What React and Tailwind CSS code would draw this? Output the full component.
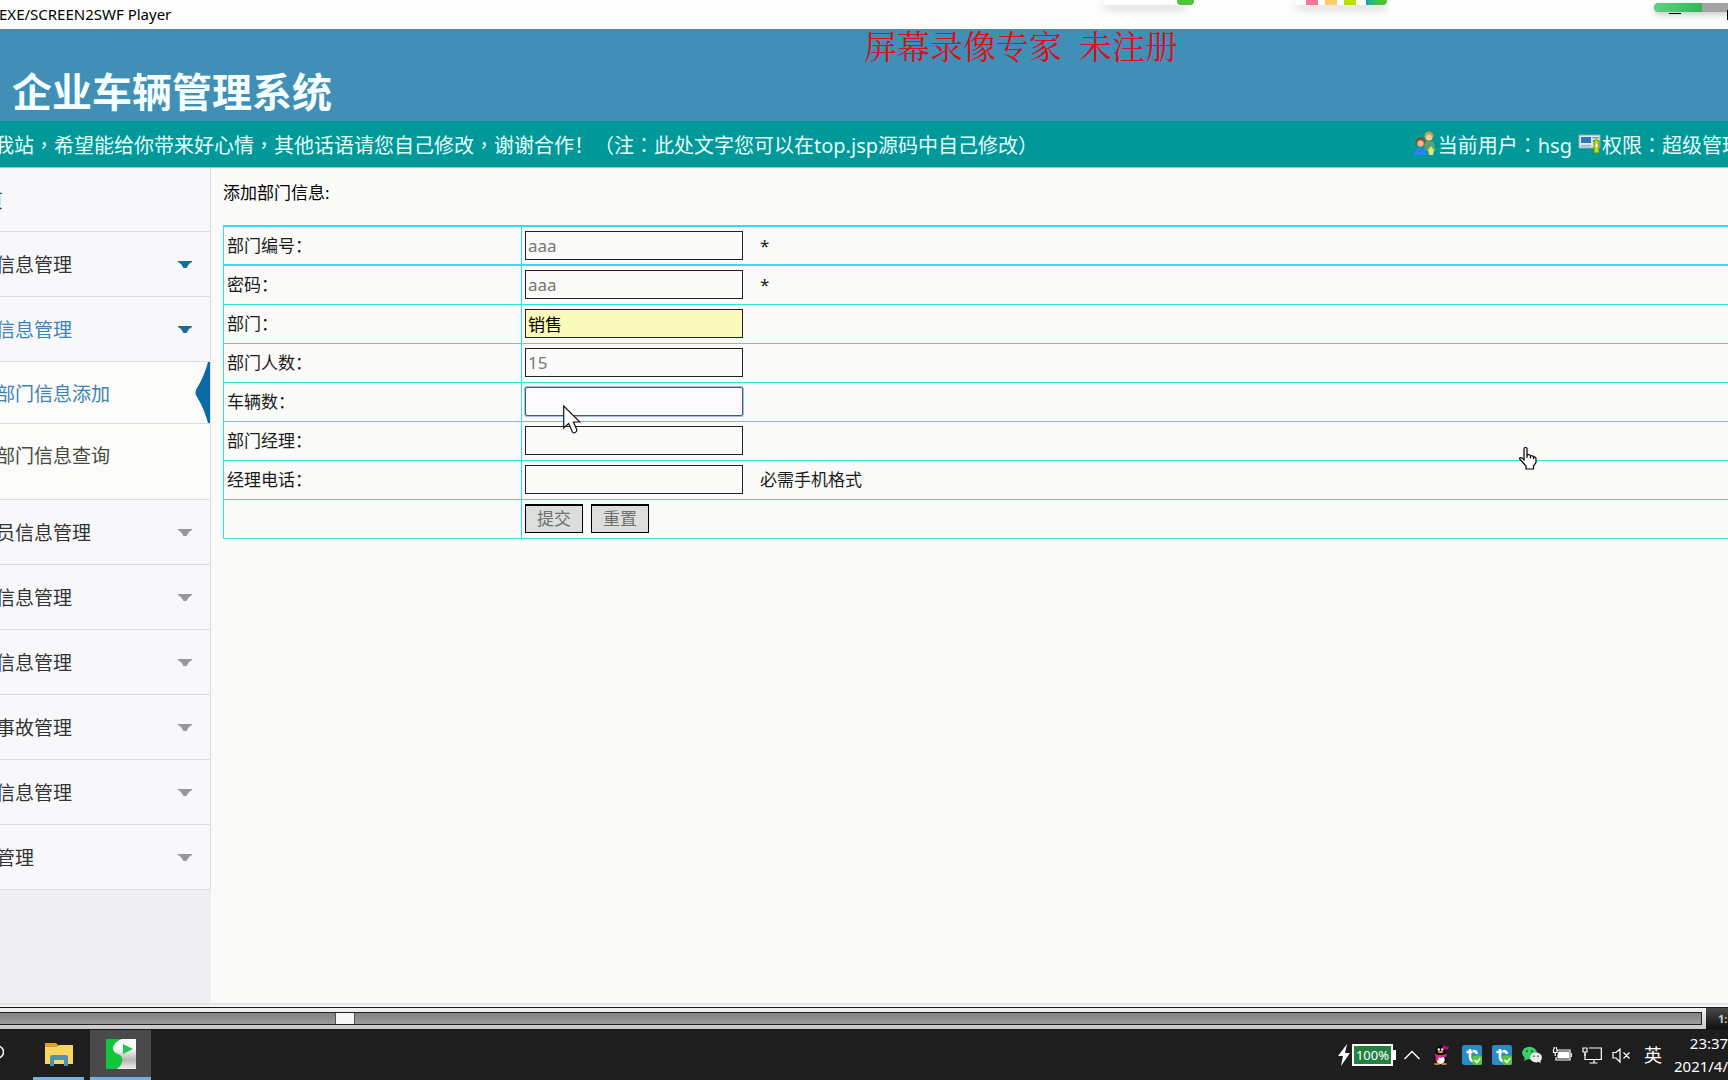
import React, { useState } from 'react';

const menuTop = [
  { label: '信息管理', state: 'opened' },
  { label: '信息管理', state: 'active' },
];

const menuBottom = ['员信息管理', '信息管理', '信息管理', '事故管理', '信息管理', '管理'];

const fields = [
  { id: 'number', label: '部门编号：', value: 'aaa', note: '*' },
  { id: 'password', label: '密码：', value: 'aaa', note: '*' },
  { id: 'dept', label: '部门：', value: '销售', look: 'filled' },
  { id: 'people', label: '部门人数：', value: '15' },
  { id: 'cars', label: '车辆数：', value: '', look: 'focused' },
  { id: 'manager', label: '部门经理：', value: '' },
  { id: 'phone', label: '经理电话：', value: '', note: '必需手机格式' },
];

export default function App() {
  return (
    <div className="relative flex min-h-screen flex-col overflow-hidden bg-[#fafaf8] font-['Noto_Sans','Noto_Sans_CJK_SC',sans-serif] text-[#1a1a1a]">
      <TitleBar />
      <Banner />
      <div className="flex flex-1">
        <Sidebar />
        <DepartmentForm />
      </div>
      <PlayerBar />
      <Taskbar />
      <HandCursor />
    </div>
  );
}

function TitleBar() {
  return (
    <div className="relative flex h-[29px] shrink-0 items-start bg-[#fefefe] pt-1">
      <span className="-ml-px text-[15px] leading-5 text-black">EXE/SCREEN2SWF Player</span>

      {/* floating toolbars that hang over the top edge */}
      <div className="absolute top-0 left-[1104px] h-[5px] w-[82px] bg-white shadow-[0_4px_8px_rgba(0,0,0,0.2)]"></div>
      <div className="absolute top-0 left-[1177px] h-[5px] w-[17px] rounded-b bg-[#4bc636]"></div>
      <div className="absolute top-0 left-[1296px] flex h-[5px] w-[91px] gap-[7px] bg-white pl-[10px] shadow-[0_4px_8px_rgba(0,0,0,0.2)]">
        <span className="w-3 bg-[#f2789c]"></span>
        <span className="w-3 bg-[#fbcd6b]"></span>
        <span className="w-3 bg-[#b9dc18]"></span>
        <span className="ml-[3px] flex-1 rounded-br bg-gradient-to-r from-[#16a3b8] via-[#3cc23c] to-[#4bc636]"></span>
      </div>
      <div className="absolute top-[3px] right-0 flex h-[9px] w-[74px] overflow-hidden rounded-l-full bg-[#a3a3a6] shadow-[0_3px_6px_rgba(0,0,0,0.2)]">
        <span className="w-12 bg-gradient-to-r from-[#5bd283] to-[#2db854]"></span>
      </div>
      <div className="absolute top-[13px] right-[47px] h-px w-3 bg-black"></div>
      <div className="absolute top-[10px] right-0 h-[10px] w-px bg-black"></div>
    </div>
  );
}

function Banner() {
  return (
    <header className="shrink-0">
      <div className="relative flex h-[92px] items-end border-t border-[#558a9c] bg-[#418fb7] pb-px pl-3">
        <h1 className="text-[40px] leading-[56px] font-bold text-[#f4ffff]">企业车辆管理系统</h1>
        <div className="absolute top-0 left-1/2 text-[33px] leading-[30px] whitespace-pre text-[#dc0d1c] font-['Noto_Serif_CJK_SC','Noto_Sans_CJK_SC',serif]">屏幕录像专家  未注册</div>
      </div>
      <div className="flex h-[47px] items-center justify-between overflow-hidden border-b border-[#8fc9cb] bg-[#009899] pt-[3px] text-xl leading-7 whitespace-nowrap text-[#e6ffff]">
        <span className="-ml-1.5 shrink-0">
          <Marked text="我站，希望能给你带来好心情，其他话语请您自己修改，谢谢合作！（注：此处文字您可以在top.jsp源码中自己修改）" />
        </span>
        <div className="-mr-3.5 flex shrink-0 items-center">
          <UsersIcon />
          <span><Marked text="当前用户：hsg" /></span>
          <RoleIcon />
          <span><Marked text="权限：超级管理" /></span>
        </div>
      </div>
    </header>
  );
}

// commas and colons sit in the middle of their square in the banner
function Marked({ text }) {
  return text.split(/([，：])/).map((part, i) =>
    part === '，' || part === '：' ? (
      <span key={i} className="font-['Noto_Sans_CJK_TC',sans-serif]">{part}</span>
    ) : (
      part
    )
  );
}

function Sidebar() {
  return (
    <nav className="w-[211px] shrink-0 overflow-hidden bg-[#efeef2] text-[19px] leading-7">
      <ul className="border-r border-[#dddce0]">
        <li className="h-16 border-b border-[#dddce0] bg-[#f8f7fa]">
          <a href="#home" className="-ml-4 flex h-full items-center pt-0.5 text-[#333]">页</a>
        </li>
        {menuTop.map((item, i) => (
          <MenuItem key={i} label={item.label} state={item.state} />
        ))}
        <li className="border-b border-[#dddce0] bg-[#fbfbf9] pb-3.5">
          <ul>
            <li className="relative h-[62px] border-b border-[#dddce0]">
              <a href="#add" className="-ml-1 flex h-full items-center pt-0.5 text-[#3f82b4]">部门信息添加</a>
              <svg className="absolute top-0 right-0 h-[61px] w-4" viewBox="0 0 16 61" preserveAspectRatio="none">
                <path d="M16 0h-2C12 8 8 18 3 26Q0 30.5 3 35C8 43 12 53 14 61h2z" fill="#0c6aa3" />
              </svg>
            </li>
            <li className="h-[61px]">
              <a href="#query" className="-ml-1 flex h-full items-center pt-0.5 text-[#444a3c]">部门信息查询</a>
            </li>
          </ul>
        </li>
        {menuBottom.map((label, i) => (
          <MenuItem key={i} label={label} />
        ))}
      </ul>
    </nav>
  );
}

function MenuItem({ label, state }) {
  return (
    <li className="h-[65px] border-b border-[#dddce0] bg-[#f8f7fa]">
      <a
        href="#menu"
        className={`-ml-1 flex h-full items-center justify-between pt-0.5 pr-[18px] ${state === 'active' ? 'text-[#3f82b4]' : 'text-[#333]'}`}
      >
        {label}
        <svg className={`h-2 w-3.5 ${state ? 'text-[#1b6a97]' : 'text-[#97979a]'}`} viewBox="0 0 14 8">
          <path d="M0 0h14v1L11 3L8.500 7H5.500L3 3L0 1z" fill="currentColor" />
        </svg>
      </a>
    </li>
  );
}

function DepartmentForm() {
  const [values, setValues] = useState(Object.fromEntries(fields.map((f) => [f.id, f.value])));

  const cell = 'border-[#2fe3e4] px-[3px] py-0';

  return (
    <main className="min-w-0 flex-1 pl-3 text-[17px] leading-6">
      <h2 className="mb-2 flex h-[49px] items-center text-black">添加部门信息:</h2>
      <form onSubmit={(e) => e.preventDefault()}>
        <table className="w-full table-fixed border-collapse">
          <colgroup>
            <col className="w-[298px]" />
            <col />
          </colgroup>
          <tbody>
            {fields.map((f, i) => (
              <tr key={f.id} className="h-[39px]">
                <td className={`${cell} border-r border-b border-l ${i < 2 ? 'border-t-2' : 'border-t'}`}>
                  <label htmlFor={f.id}>{f.label}</label>
                </td>
                <td className={`${cell} border-b ${i < 2 ? 'border-t-2' : 'border-t'}`}>
                  <div className="relative flex items-center gap-[17px]">
                    <Field field={f} value={values[f.id]} onChange={(v) => setValues({ ...values, [f.id]: v })} />
                    {f.note && <span>{f.note}</span>}
                    {f.look === 'focused' && <ArrowCursor />}
                  </div>
                </td>
              </tr>
            ))}
            <tr className="h-[39px]">
              <td className={`${cell} border`}></td>
              <td className={`${cell} border-t border-b`}>
                <div className="flex gap-2">
                  <FormButton type="submit">提交</FormButton>
                  <FormButton type="reset">重置</FormButton>
                </div>
              </td>
            </tr>
          </tbody>
        </table>
      </form>
    </main>
  );
}

function Field({ field, value, onChange }) {
  const looks = {
    filled: 'border-[#222] bg-[#fafbba] text-black',
    focused: 'rounded-xs border-[#3a5c98] bg-[#fbfbfd] text-[#777] ring-1 ring-[#3a5c98]/40',
  };

  return (
    <input
      id={field.id}
      type="text"
      value={value}
      onChange={(e) => onChange(e.target.value)}
      className={`h-[29px] w-[218px] border px-0.5 outline-none ${looks[field.look] || 'border-[#222] bg-[#fafaf8] text-[#777]'}`}
    />
  );
}

function FormButton({ type, children }) {
  return (
    <button type={type} className="h-[29px] w-[58px] border border-t-2 border-black bg-[#dcdedc] leading-6 text-[#707070]">
      {children}
    </button>
  );
}

function PlayerBar() {
  const [position, setPosition] = useState(199);

  return (
    <div className="shrink-0 border-t-2 border-[#e4e4e4] bg-[#f6f6f6] pt-0.5">
      <div className="flex h-[23px] border-y border-[#1a1a1a] bg-[#111]">
        <div className="flex flex-1 items-center bg-gradient-to-b from-[#f2f2f2] to-[#c9c9c7] pr-1">
          <input
            type="range"
            aria-label="播放进度"
            min="0"
            max="1000"
            value={position}
            onChange={(e) => setPosition(Number(e.target.value))}
            className="h-[13px] w-full appearance-none border-y border-r border-[#222] bg-gradient-to-b from-[#828282] to-[#9b9b9b] outline-none [&::-webkit-slider-thumb]:h-[11px] [&::-webkit-slider-thumb]:w-5 [&::-webkit-slider-thumb]:appearance-none [&::-webkit-slider-thumb]:border-x [&::-webkit-slider-thumb]:border-[#555] [&::-webkit-slider-thumb]:bg-[#f6f6f6]"
          />
        </div>
        <div className="flex w-[22px] items-center overflow-hidden bg-gradient-to-b from-[#4a4a4a] to-[#111] pl-3 text-[11px] leading-4 font-bold whitespace-nowrap text-[#c8c8c8]">1:</div>
      </div>
    </div>
  );
}

function Taskbar() {
  return (
    <footer className="flex h-[50px] shrink-0 items-stretch justify-between overflow-hidden bg-[#1e1e1f] text-white">
      <div className="flex">
        <svg className="mr-[29px] h-full w-1" viewBox="0 0 4 50">
          <circle cx="-2.500" cy="22" r="6" fill="none" stroke="#fff" strokeWidth="1.500" />
        </svg>
        <button type="button" aria-label="文件资源管理器" className="mr-1.5 flex w-[51px] items-center justify-center border-b-[3px] border-[#76b0e0]">
          <FolderIcon />
        </button>
        <button type="button" aria-label="录像播放器" className="flex w-[61px] items-center justify-center border-b-[3px] border-[#76b0e0] bg-[#4a4a4c]">
          <PlayerIcon />
        </button>
      </div>
      <div className="flex items-center">
        <svg className="mr-0.5 h-6 w-3" viewBox="0 0 12 24">
          <path d="M9 1L0 13h5L3 23l9-13H7z" fill="#fff" />
        </svg>
        <span className="flex h-[22px] w-[41px] items-center justify-center border-2 border-white bg-[#23803f] text-[13px] leading-4">100%</span>
        <span className="mr-2 h-2.5 w-[3px] bg-white"></span>
        <svg className="mr-3 h-2.5 w-4" viewBox="0 0 16 10">
          <path d="M0.500 9L8 1.500L15.500 9" fill="none" stroke="#fff" strokeWidth="1.400" />
        </svg>
        <PenguinIcon />
        <SyncIcon />
        <SyncIcon />
        <WechatIcon />
        <svg className="mr-2.5 h-5 w-5" viewBox="0 0 20 20" fill="none" stroke="#fff" strokeWidth="1.200">
          <path d="M1.500 4v3.500h3.500V4M2.200 2v2M4.300 2v2M3.200 7.500V11" />
          <path d="M5 5h13v10H4v-3" />
          <path d="M7 7h9.500v6H6v-3z" fill="#fff" />
          <path d="M19.300 8v4" />
        </svg>
        <svg className="mr-2.5 h-5 w-5" viewBox="0 0 20 20" fill="none" stroke="#fff" strokeWidth="1.200">
          <path d="M7 3h12.300v11.500H3V8M12 14.500V18M7.500 18h8" />
          <path d="M1 3h4v4H1zM3 7v4" />
        </svg>
        <svg className="mr-3 h-5 w-5" viewBox="0 0 20 20" fill="none" stroke="#fff" strokeWidth="1.200">
          <path d="M1 7.500h3L8 4v13l-4-4H1zM11.500 7.500l6 6M17.500 7.500l-6 6" />
        </svg>
        <span className="mr-3 text-[18px] leading-6">英</span>
        <div className="flex w-[54px] flex-col items-center text-[15px] leading-[23px] whitespace-nowrap">
          <span className="ml-4">23:37</span>
          <span>2021/4/</span>
        </div>
      </div>
    </footer>
  );
}

function UsersIcon() {
  return (
    <svg className="mr-px mb-1.5 h-6 w-6" viewBox="0 0 24 24">
      <circle cx="16" cy="5" r="4.500" fill="#c9a24a" />
      <circle cx="16" cy="6.500" r="3" fill="#f3cf9b" />
      <path d="M11 11q5-2 10 0l2 9H12z" fill="#5aa06a" />
      <circle cx="7.500" cy="11" r="4.700" fill="#8a4b35" />
      <circle cx="7.500" cy="12.500" r="3.200" fill="#f0b58c" />
      <path d="M1 24q0-7 6.500-7T14 24z" fill="#2f80ea" />
      <path d="M18 15l3 4-1 5h-4l-1-5z" fill="#d7ec7a" />
    </svg>
  );
}

function RoleIcon() {
  return (
    <svg className="mb-1.5 ml-1.5 h-6 w-6" viewBox="0 0 24 24">
      <path d="M1 4h21v13H1z" fill="#dfeaf4" stroke="#8fa4b8" />
      <path d="M3 6h10v6H3z" fill="#2f78b8" />
      <path d="M14.500 6h6v1.500h-6zM14.500 9h6v1.500h-6z" fill="#7a94ac" />
      <path d="M3 14h10v1.500H3z" fill="#9fb2c2" />
      <path d="M16 10q2.500-3 5 0v12h-5z" fill="#b7e01c" stroke="#5c8a12" />
      <path d="M17.500 13h2v3h-2z" fill="#fff" />
    </svg>
  );
}

function FolderIcon() {
  return (
    <svg className="h-6 w-7" viewBox="0 0 28 24">
      <path d="M0 1h11l2 2v4H0z" fill="#dda12e" />
      <path d="M0 5h12l2-2h14v19H0z" fill="#fbd664" />
      <path d="M5 24v-9q0-2 2-2h14q2 0 2 2v9h-4v-5q0-1-1-1h-8q-1 0-1 1v5z" fill="#4d93b5" />
    </svg>
  );
}

function PlayerIcon() {
  return (
    <svg className="h-[30px] w-[30px]" viewBox="0 0 30 30">
      <defs>
        <linearGradient id="silver" x1="0" y1="0" x2="0" y2="1">
          <stop offset="0.300" stopColor="#fff" />
          <stop offset="0.700" stopColor="#b5b5b5" />
          <stop offset="1" stopColor="#efefef" />
        </linearGradient>
      </defs>
      <path d="M0 0h30v30H0z" fill="url(#silver)" />
      <path d="M0 0h16C5 4 5 13 12 15c6 2 6 10-1 15H0z" fill="#12c63c" />
      <path d="M17 5l10 5-10 5z" fill="#1fc94c" />
    </svg>
  );
}

function PenguinIcon() {
  return (
    <svg className="mr-3 h-5 w-[18px]" viewBox="0 0 18 20">
      <ellipse cx="8.500" cy="12.500" rx="6.500" ry="6.500" fill="#060608" />
      <ellipse cx="8.500" cy="6" rx="5" ry="5.500" fill="#060608" />
      <ellipse cx="8.500" cy="14.500" rx="4.200" ry="4.500" fill="#fff" />
      <circle cx="6.800" cy="4.500" r="1.200" fill="#fff" />
      <circle cx="10.200" cy="4.500" r="1.200" fill="#fff" />
      <ellipse cx="8.500" cy="7" rx="3" ry="1" fill="#f5a623" />
      <path d="M2.500 8.500q6 3 12 0v3q-4 1.500-8 1v3h-3v-3.500z" fill="#e0218a" />
      <path d="M10 2l3-2 1 2 3-1-1 4-2-1-3 0z" fill="#a3206e" />
      <ellipse cx="5" cy="19" rx="3" ry="1" fill="#f08a1d" />
      <ellipse cx="12" cy="19" rx="3" ry="1" fill="#f08a1d" />
    </svg>
  );
}

function SyncIcon() {
  return (
    <svg className="mr-2.5 h-5 w-5" viewBox="0 0 20 20">
      <rect width="20" height="20" rx="2.500" fill="#2b8bc4" />
      <path d="M8 4v8q0 4 4 4h1M4.500 7h6M14.500 9V7.500Q13 5.500 11 6.500" fill="none" stroke="#fff" strokeWidth="2.600" />
      <rect x="10.500" y="10.500" width="9.500" height="9.500" rx="2" fill="#5cc43a" />
      <path d="M12.500 15l2.300 2.300 3.500-4" fill="none" stroke="#fff" strokeWidth="1.600" />
    </svg>
  );
}

function WechatIcon() {
  return (
    <svg className="mr-2.5 h-5 w-5" viewBox="0 0 20 20">
      <ellipse cx="7.500" cy="8" rx="7.300" ry="6.300" fill="#39cf6b" />
      <path d="M3 12l-1 4 4-2z" fill="#39cf6b" />
      <circle cx="5" cy="6.200" r="1" fill="#17532b" />
      <circle cx="10" cy="6.200" r="1" fill="#17532b" />
      <ellipse cx="14" cy="12.500" rx="6" ry="5" fill="#e9e9e9" />
      <path d="M16 16l2.500 2.500V15z" fill="#e9e9e9" />
      <circle cx="12" cy="11.200" r="0.900" fill="#666" />
      <circle cx="16" cy="11.200" r="0.900" fill="#666" />
    </svg>
  );
}

function ArrowCursor() {
  return (
    <svg className="absolute top-[18px] left-[38px] z-10 h-[29px] w-[18px]" viewBox="0 0 18 29">
      <path d="M0.700 1v22l5-4.500 3.500 8q1 2 3 1t1.500-3L10.500 17H17z" fill="#fff" stroke="#111" strokeWidth="1.200" />
    </svg>
  );
}

function HandCursor() {
  return (
    <svg className="absolute top-[447px] left-[1519px] h-[23px] w-[18px]" viewBox="0 0 18 23">
      <path
        d="M5 13V2q0-1.500 1.500-1.500T8 2v6q3-1 3.500 1 2.500-0.800 3 1 2.500-0.500 2.500 2v3.500L14.500 19v3H7v-3L1 12.500q-1-1.500 0.500-1.800T5 13zM8 8v3M11.500 9v2.500M14.500 10v2"
        fill="#fff"
        stroke="#000"
        strokeWidth="1.200"
      />
    </svg>
  );
}
